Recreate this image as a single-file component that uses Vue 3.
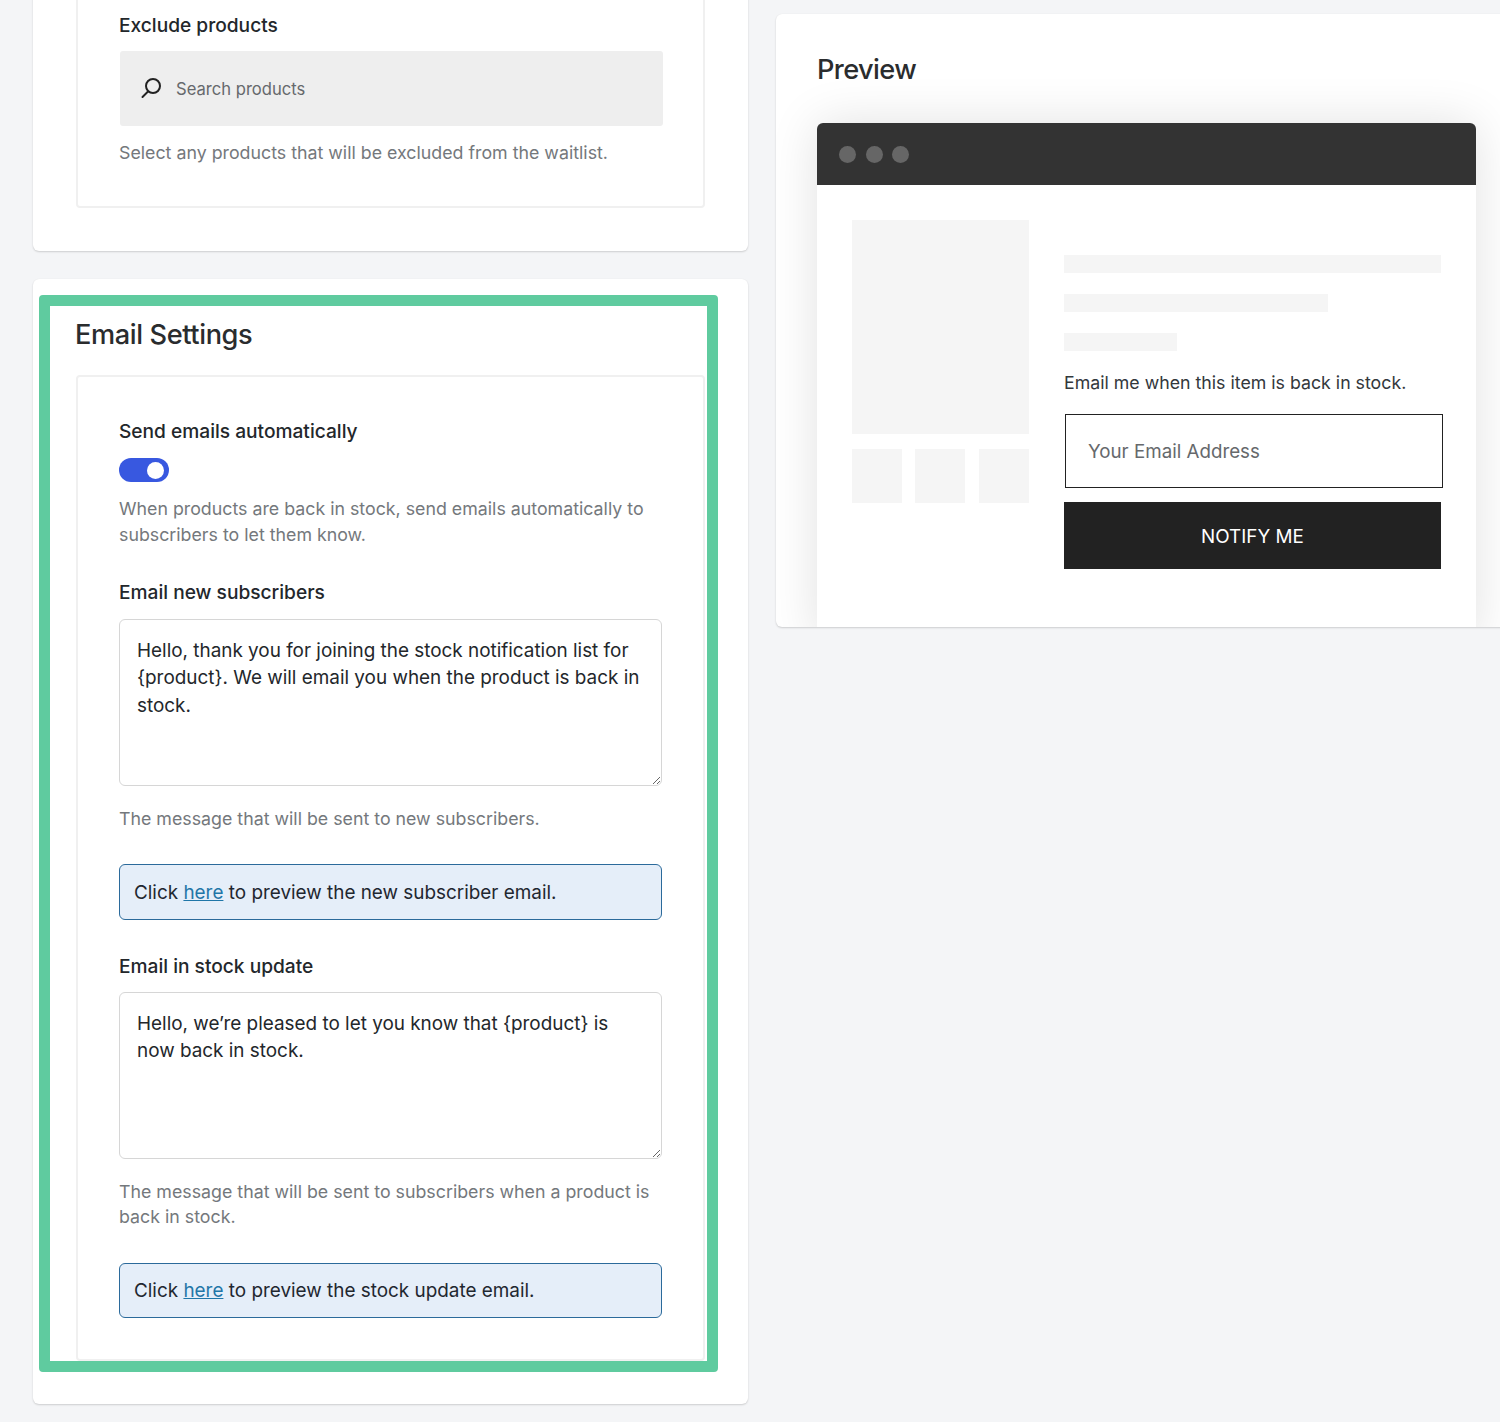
<script setup>
const newSubscriberMessage = 'Hello, thank you for joining the stock notification list for {product}. We will email you when the product is back in stock.'
const stockUpdateMessage = 'Hello, we’re pleased to let you know that {product} is now back in stock.'
</script>

<template>
  <div class="page">
    <div class="left">
      <section class="card first">
        <div class="panel first-panel">
          <h3 class="label">Exclude products</h3>
          <div class="search">
            <svg class="search-icon" viewBox="0 0 22 22" width="22" height="22" fill="none" stroke="#222" stroke-width="2" stroke-linecap="round">
              <circle cx="13" cy="9" r="7" />
              <path d="M8 14.5 2.5 20" />
            </svg>
            <span>Search products</span>
          </div>
          <p class="help search-help">Select any products that will be excluded from the waitlist.</p>
        </div>
      </section>

      <section class="card second">
        <div class="highlight"></div>
        <h2 class="title">Email Settings</h2>
        <div class="panel">
          <h3 class="label">Send emails automatically</h3>
          <div class="toggle"><span class="knob"></span></div>
          <p class="help toggle-help">When products are back in stock, send emails automatically to subscribers to let them know.</p>

          <h3 class="label section-label">Email new subscribers</h3>
          <textarea class="message" :value="newSubscriberMessage"></textarea>
          <p class="help message-help">The message that will be sent to new subscribers.</p>
          <div class="notice">Click <a href="#">here</a> to preview the new subscriber email.</div>

          <h3 class="label section-label stock-label">Email in stock update</h3>
          <textarea class="message stock-message" :value="stockUpdateMessage"></textarea>
          <p class="help message-help">The message that will be sent to subscribers when a product is back in stock.</p>
          <div class="notice stock-notice">Click <a href="#">here</a> to preview the stock update email.</div>
        </div>
      </section>
    </div>

    <section class="card preview">
      <h2 class="title preview-title">Preview</h2>
      <div class="browser">
        <div class="browser-bar">
          <span class="dot"></span><span class="dot"></span><span class="dot"></span>
        </div>
        <div class="product">
          <div class="gallery">
            <div class="ph main-image"></div>
            <div class="thumbs">
              <div class="ph thumb"></div>
              <div class="ph thumb"></div>
              <div class="ph thumb"></div>
            </div>
          </div>
          <div class="info">
            <div class="ph line l1"></div>
            <div class="ph line l2"></div>
            <div class="ph line l3"></div>
            <p class="cta">Email me when this item is back in stock.</p>
            <div class="email">Your Email Address</div>
            <div class="notify">NOTIFY ME</div>
          </div>
        </div>
      </div>
    </section>
  </div>
</template>

<style>
html, body { margin: 0; background: #f4f5f7; }
</style>

<style scoped>
* { box-sizing: border-box; }
.page {
  height: 1422px;
  width: 1500px;
  overflow: hidden;
  background: #f4f5f7;
  display: flex;
  align-items: flex-start;
  gap: 28px;
  padding-left: 33px;
  font-family: Inter, "Liberation Sans", sans-serif;
  color: #23272b;
}
.left { width: 715px; flex: none; margin-top: -100px; }
.card {
  background: #fff;
  border-radius: 6px;
  box-shadow: 0 1px 2px rgba(0, 0, 0, .16), 0 0 1px rgba(0, 0, 0, .06);
}
.first { height: 351px; padding: 40px 43px 0; }
.second {
  position: relative;
  margin-top: 28px;
  height: 1125px;
  padding: 39px 43px 0 42px;
}
.highlight {
  position: absolute;
  left: 6px;
  top: 16px;
  width: 679px;
  height: 1077px;
  border: 11px solid #5fcb9f;
  border-radius: 4px;
  pointer-events: none;
}
.title {
  margin: 0;
  font-size: 27.2px;
  line-height: 34px;
  font-weight: 500;
  letter-spacing: -0.4px;
  color: #2a2c2e;
}
.panel {
  margin: 23px 0 0 1px;
  width: 629px;
  border: 2px solid #f0f0f0;
  border-radius: 4px;
  padding: 41px 41px 41px;
}
.first-panel { margin-top: 0; height: 268px; padding-top: 70px; margin-left: 0; }
.label {
  margin: 0;
  font-size: 19.15px;
  line-height: 26px;
  font-weight: 500;
  color: #23272b;
}
.help {
  margin: 0;
  font-size: 17.8px;
  line-height: 25.5px;
  color: #74787c;
}
.search {
  margin: 13px 0 0 1px;
  width: 543px;
  height: 75px;
  background: #eeeeee;
  border-radius: 3px;
  display: flex;
  align-items: center;
  padding-left: 20px;
  gap: 14px;
  font-size: 16.6px;
  color: #66696c;
}
.search-icon { flex: none; margin-top: -2px; }
.search-help { margin-top: 14px; }
.toggle {
  margin-top: 14px;
  width: 50px;
  height: 24px;
  border-radius: 12px;
  background: #3858e0;
  display: flex;
  align-items: center;
  justify-content: flex-end;
  padding-right: 5px;
}
.knob { width: 17px; height: 17px; border-radius: 50%; background: #fff; }
.toggle-help { margin-top: 14px; }
.section-label { margin-top: 32px; }
.stock-label { margin-top: 33px; }
.message {
  display: block;
  margin-top: 14px;
  width: 543px;
  height: 167px;
  border: 1.5px solid #d6d6d6;
  border-radius: 6px;
  padding: 17px 17px;
  font-family: inherit;
  font-size: 18.9px;
  line-height: 27.4px;
  color: #23272b;
  background: #fff;
  outline: none;
}
.stock-message { margin-top: 13px; }
.message-help { margin-top: 20px; }
.notice {
  margin-top: 32px;
  width: 543px;
  height: 56px;
  display: flex;
  align-items: center;
  white-space: pre-wrap;
  padding: 1px 14px 0;
  background: #e5eef9;
  border: 1.5px solid #2b6a9b;
  border-radius: 6px;
  font-size: 18.9px;
  color: #1f2730;
}
.stock-notice { height: 55px; margin-top: 33px; }
.notice a { color: #1f76a8; text-decoration: underline; }
.preview {
  flex: none;
  width: 760px;
  height: 613px;
  margin-top: 14px;
  padding: 39px 0 0 41px;
  overflow: hidden;
}
.preview-title { letter-spacing: -0.6px; }
.browser {
  margin-top: 36px;
  width: 659px;
  background: #fff;
  border-radius: 6px 6px 0 0;
  box-shadow: 0 0 50px rgba(0, 0, 0, .12);
  height: 520px;
}
.browser-bar {
  height: 62px;
  background: #333;
  border-radius: 6px 6px 0 0;
  display: flex;
  align-items: center;
  padding-left: 22px;
  gap: 9.5px;
}
.dot { width: 17px; height: 17px; border-radius: 50%; background: #666; }
.product { display: flex; gap: 35px; padding: 35px 35px 0; }
.gallery { width: 177px; flex: none; }
.ph { background: #f5f5f5; }
.main-image { height: 214px; }
.thumbs { margin-top: 15px; display: flex; gap: 13px; }
.thumb { width: 50px; height: 54px; }
.thumb:last-child { margin-left: 1px; }
.info { width: 378px; flex: none; padding-top: 35px; }
.line { height: 18px; margin-bottom: 21px; }
.l1 { width: 377px; }
.l2 { width: 264px; }
.l3 { width: 113px; margin-bottom: 18px; }
.cta { margin: 0; font-size: 17.75px; line-height: 27px; color: #33383c; }
.email {
  margin: 18px 0 0 1px;
  width: 378px;
  height: 74px;
  border: 1.5px solid #222;
  display: flex;
  align-items: center;
  padding-left: 22px;
  font-size: 18.75px;
  color: #66696c;
}
.notify {
  margin-top: 14px;
  width: 377px;
  height: 67px;
  padding-top: 1px;
  background: #222;
  color: #fff;
  display: flex;
  align-items: center;
  justify-content: center;
  font-size: 18.85px;
}
</style>
